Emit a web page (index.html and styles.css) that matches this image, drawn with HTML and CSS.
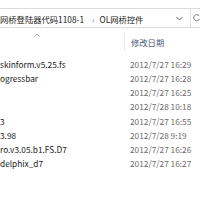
FILE: index.html
```html
<!DOCTYPE html>
<html>
<head>
<meta charset="utf-8">
<link rel="stylesheet" href="styles.css">
</head>
<body>
<div class="win">
  <div class="addr">
    <div class="path"><span>网桥登陆器代码1108-1</span><span class="sep">›</span><span>OL网桥控件</span></div>
    <svg class="chev" width="7" height="5" viewBox="0 0 7 5"><path d="M0.5 1 L3.5 4 L6.5 1" fill="none" stroke="#666" stroke-width="1"/></svg>
    <div class="refresh"><svg width="8" height="10" viewBox="0 0 8 10"><path d="M7 2.5 A3.5 3.5 0 1 0 7.5 6" fill="none" stroke="#666" stroke-width="1"/></svg></div>
  </div>
  <div class="header">
    <div class="hname"><svg class="sort" width="6" height="4" viewBox="0 0 6 4"><path d="M0.5 3.5 L3 1 L5.5 3.5" fill="none" stroke="#aaa" stroke-width="1"/></svg></div>
    <div class="hdate">修改日期</div>
  </div>
  <div class="rows">
    <div class="row"><span class="name">skinform.v5.25.fs</span><span class="date">2012/7/27 16:29</span></div>
    <div class="row"><span class="name">ogressbar</span><span class="date">2012/7/27 16:28</span></div>
    <div class="row"><span class="name"></span><span class="date">2012/7/27 16:25</span></div>
    <div class="row"><span class="name"></span><span class="date">2012/7/28 10:18</span></div>
    <div class="row"><span class="name">3</span><span class="date">2012/7/27 16:55</span></div>
    <div class="row"><span class="name">3.98</span><span class="date">2012/7/28 9:19</span></div>
    <div class="row"><span class="name">ro.v3.05.b1.FS.D7</span><span class="date">2012/7/27 16:26</span></div>
    <div class="row"><span class="name">delphix_d7</span><span class="date">2012/7/27 16:27</span></div>
  </div>
</div>
</body>
</html>
```
FILE: styles.css
```css
html, body {
  margin: 0;
  padding: 0;
  background: #ffffff;
}
.win {
  width: 200px;
  height: 200px;
  overflow: hidden;
  font-family: "Noto Sans CJK SC", "Noto Sans", sans-serif;
  font-size: 8.3px;
  line-height: 12px;
}
.addr {
  margin-top: 8px;
  height: 18px;
  border-top: 1px solid #dcdcdc;
  border-bottom: 1px solid #dcdcdc;
  display: flex;
  align-items: center;
}
.path {
  flex: 1;
  white-space: nowrap;
  color: #1a1a1a;
  display: flex;
  align-items: center;
  padding-top: 2px;
}
.sep {
  margin: 0 5px 0 8px;
  color: #777;
}
.chev {
  margin-right: 7px;
}
.refresh {
  width: 7px;
  height: 18px;
  border-left: 1px solid #e0e0e0;
  display: flex;
  align-items: center;
  justify-content: flex-start;
  padding-left: 2px;
  overflow: hidden;
}
.header {
  height: 19px;
  margin-top: 4px;
  display: flex;
}
.hname {
  width: 124px;
  border-right: 1px solid #e8e8e8;
  position: relative;
}
.sort {
  position: absolute;
  left: 34px;
  top: 1px;
}
.hdate {
  padding-left: 6px;
  color: #4c607a;
  line-height: 20px;
}
.rows {
  margin-top: 6px;
}
.row {
  height: 14.15px;
  display: flex;
  align-items: center;
  white-space: nowrap;
}
.name {
  width: 130px;
  color: #1a1a1a;
}
.date {
  color: #6d6d6d;
}
```
